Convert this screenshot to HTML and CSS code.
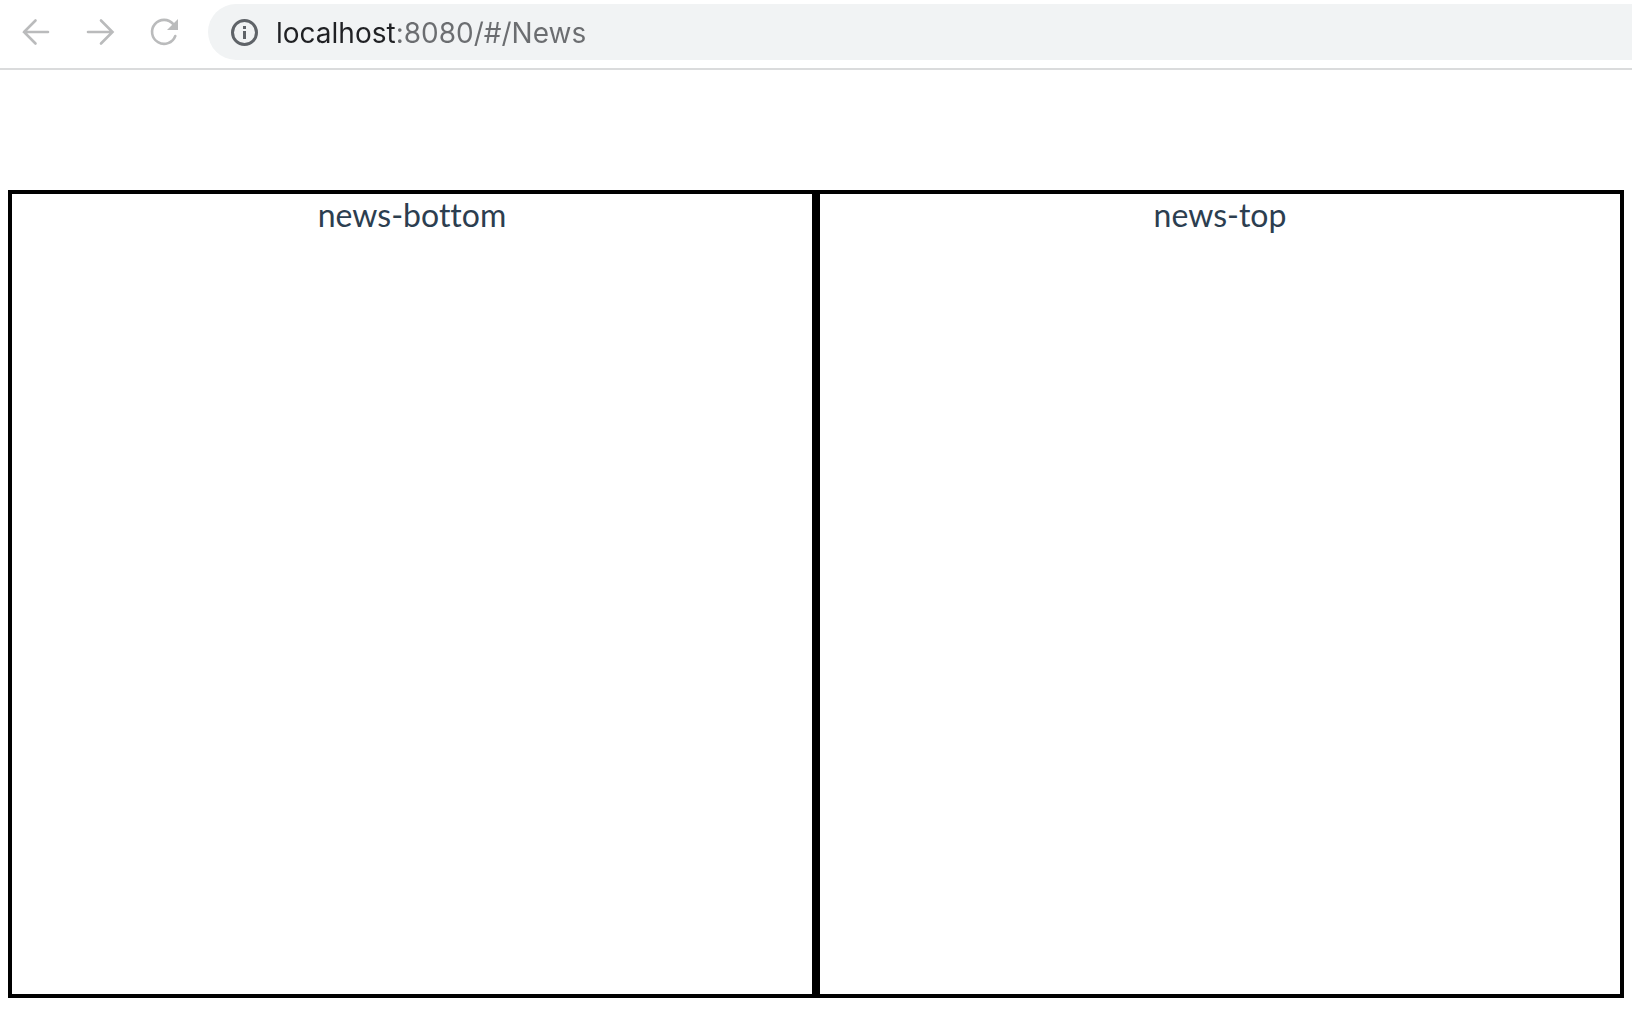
FILE: index.html
```html
<!DOCTYPE html>
<html lang="en">
<head>
<meta charset="utf-8">
<title>News</title>
<link rel="stylesheet" href="styles.css">
</head>
<body>
<header class="toolbar">
  <nav class="controls" aria-label="Browser controls">
    <button class="control" type="button" aria-label="Back">
      <svg class="icon" viewBox="0 0 32 32"><path d="M28 16H4M15.500 4.500L4 16L15.500 27.500"/></svg>
    </button>
    <button class="control" type="button" aria-label="Forward">
      <svg class="icon" viewBox="0 0 32 32"><path d="M4 16H28M17 4.500L28.500 16L17 27.500"/></svg>
    </button>
    <button class="control" type="button" aria-label="Reload">
      <svg class="icon" viewBox="0 0 32 32"><path d="M25.300 8.200A12 12 0 1 0 27.300 20"/><path class="fill" d="M30 3V14H19Z"/></svg>
    </button>
  </nav>
  <div class="address">
    <button class="info" type="button" aria-label="Site information">
      <svg class="icon" viewBox="0 0 32 32"><circle cx="16.500" cy="16.500" r="12" stroke-width="3"/><path class="fill" d="M15 10h3v3h-3zM15 15h3v8h-3z"/></svg>
    </button>
    <input class="url" type="text" aria-label="Address" value="localhost:8080/#/News" spellcheck="false">
  </div>
</header>
<main class="panels">
  <section class="panel">news-bottom</section>
  <section class="panel">news-top</section>
</main>
</body>
</html>
```
FILE: styles.css
```css
* {
  box-sizing: border-box;
}

body {
  margin: 0;
  background: #fff;
}

.toolbar {
  display: flex;
  align-items: center;
  height: 70px;
  padding: 4px 0 8px 20px;
  border-bottom: 2px solid #dadbdc;
}

.controls {
  display: flex;
  gap: 32px;
  margin-right: 28px;
}

.control,
.info {
  flex: none;
  width: 32px;
  height: 32px;
  padding: 0;
  border: 0;
  background: none;
  color: #babbbc;
}

.icon {
  display: block;
  width: 32px;
  height: 32px;
  fill: none;
  stroke: currentColor;
  stroke-width: 2.6;
  stroke-linecap: round;
}

.icon .fill {
  fill: currentColor;
  stroke: none;
}

.address {
  display: flex;
  flex: 1;
  align-items: center;
  gap: 16px;
  height: 56px;
  padding-left: 20px;
  border-radius: 28px 0 0 28px;
  background: #f1f3f4;
}

.info {
  color: #5f6368;
}

/* The host name is darker than the rest of the address. */
.url {
  flex: 1;
  min-width: 0;
  height: 42px;
  padding: 2px 0 0;
  border: 0;
  outline: 0;
  background: linear-gradient(to right, #202124 120px, #6b6d70 120px);
  background-clip: text;
  color: transparent;
  caret-color: #202124;
  font: 28px/40px Inter, sans-serif;
}

.panels {
  display: grid;
  grid-template-columns: 1fr 1fr;
  margin: 120px 8px 12px;
}

.panel {
  aspect-ratio: 1;
  border: 4px solid #000;
  color: #2c3e50;
  font: 32px/42px Lato, sans-serif;
  font-variant-ligatures: none;
  text-align: center;
}
```
